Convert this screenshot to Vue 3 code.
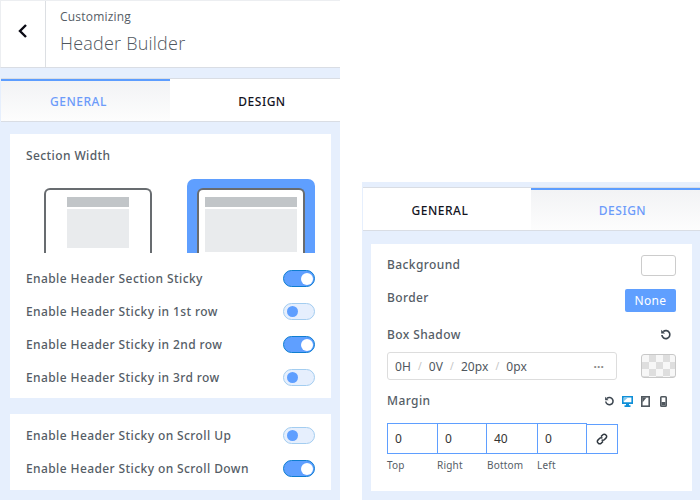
<script setup>
const stickyRows = [
  { label: 'Enable Header Section Sticky', on: true },
  { label: 'Enable Header Sticky in 1st row', on: false },
  { label: 'Enable Header Sticky in 2nd row', on: true },
  { label: 'Enable Header Sticky in 3rd row', on: false },
]
const scrollRows = [
  { label: 'Enable Header Sticky on Scroll Up', on: false },
  { label: 'Enable Header Sticky on Scroll Down', on: true },
]
const margins = [
  { value: '0', label: 'Top', width: 51 },
  { value: '0', label: 'Right', width: 50 },
  { value: '40', label: 'Bottom', width: 52 },
  { value: '0', label: 'Left', width: 50 },
]
</script>

<template>
  <div class="page">
    <section class="panel left">
      <header class="top">
        <div class="back">
          <svg width="12" height="16" viewBox="0 0 12 16"><path d="M9 2 3 8l6 6" fill="none" stroke="#0a0a14" stroke-width="2.4" /></svg>
        </div>
        <div class="heading">
          <div class="small">Customizing</div>
          <div class="big">Header Builder</div>
        </div>
      </header>
      <nav class="tabs first-tabs">
        <div class="tab active">GENERAL</div>
        <div class="tab">DESIGN</div>
      </nav>
      <div class="card width-card">
        <div class="title">Section Width</div>
        <div class="previews">
          <div class="preview">
            <div class="frame narrow">
              <div class="bar"></div>
              <div class="body"></div>
            </div>
          </div>
          <div class="preview selected">
            <div class="frame wide">
              <div class="bar"></div>
              <div class="body"></div>
            </div>
          </div>
        </div>
        <div class="rows">
          <div v-for="row in stickyRows" :key="row.label" class="row">
            <span>{{ row.label }}</span>
            <span class="toggle" :class="{ on: row.on }"><i></i></span>
          </div>
        </div>
      </div>
      <div class="card scroll-card">
        <div v-for="row in scrollRows" :key="row.label" class="row">
          <span>{{ row.label }}</span>
          <span class="toggle" :class="{ on: row.on }"><i></i></span>
        </div>
      </div>
    </section>

    <section class="panel right">
      <nav class="tabs second-tabs">
        <div class="tab">GENERAL</div>
        <div class="tab active">DESIGN</div>
      </nav>
      <div class="card design-card">
        <div class="line bg-line">
          <span class="label">Background</span>
          <span class="swatch"></span>
        </div>
        <div class="line border-line">
          <span class="label">Border</span>
          <button class="none">None</button>
        </div>
        <div class="line shadow-head">
          <span class="label">Box Shadow</span>
          <svg class="shadow-reset" width="12" height="12" viewBox="0 0 12 12"><path d="M3.200 2.600A4 4 0 1 1 1.900 6" fill="none" stroke="#3c4650" stroke-width="1.700" /><path d="M1.200 .8v3.800H5z" fill="#3c4650" /></svg>
        </div>
        <div class="shadow-line">
          <div class="shadow-input">
            <span>0H</span><em>/</em><span>0V</span><em>/</em><span>20px</span><em>/</em><span>0px</span>
            <b>···</b>
          </div>
          <span class="swatch checker"></span>
        </div>
        <div class="line margin-head">
          <span class="label">Margin</span>
          <div class="devices">
            <span class="device"><svg width="11" height="11" viewBox="0 0 12 12"><path d="M3.200 2.600A4 4 0 1 1 1.900 6" fill="none" stroke="#3c4650" stroke-width="1.700" /><path d="M1.200 .8v3.800H5z" fill="#3c4650" /></svg></span>
            <span class="device"><svg width="11" height="11" viewBox="0 0 11 11"><path d="M.8.8h9.400v6.400H.8z" fill="#fff" stroke="#0f8fd8" stroke-width="1.600" /><path d="M0 6.500h11V8H0zM4 8h3v1.300h1.500V11h-6V9.300H4z" fill="#0f8fd8" /><path d="M2 2h3.500L2 5z" fill="#0f8fd8" opacity=".5" /></svg></span>
            <span class="device"><svg width="9" height="11" viewBox="0 0 9 11"><rect x=".8" y=".8" width="7.400" height="9.400" fill="#fff" stroke="#50585f" stroke-width="1.600" /><path d="M1.500 1.500h4l-4 5z" fill="#50585f" /></svg></span>
            <span class="device"><svg width="7" height="11" viewBox="0 0 7 11"><rect x=".8" y=".8" width="5.400" height="9.400" rx=".8" fill="#fff" stroke="#50585f" stroke-width="1.600" /><path d="M1.500 6h4v3.500h-4z" fill="#50585f" /></svg></span>
          </div>
        </div>
        <div class="margin-fields">
          <div v-for="m in margins" :key="m.label" class="cell" :style="{ width: m.width + 'px' }">{{ m.value }}</div>
          <div class="link">
            <svg width="12" height="12" viewBox="0 0 12 12" fill="none" stroke="#303840" stroke-width="1.500"><path d="M5 3.600 6.800 1.800a1.900 1.900 0 0 1 2.900 0l.4.400a1.900 1.900 0 0 1 0 2.700L8.300 6.700a1.900 1.900 0 0 1-2.700 0" /><path d="M7 8.400 5.200 10.200a1.900 1.900 0 0 1-2.900 0l-.4-.4a1.900 1.900 0 0 1 0-2.700L3.700 5.300a1.900 1.900 0 0 1 2.700 0" /></svg>
          </div>
        </div>
        <div class="margin-labels">
          <span>Top</span>
          <span>Right</span>
          <span>Bottom</span>
          <span>Left</span>
        </div>
      </div>
    </section>
  </div>
</template>

<style>
body {
  background: #fff;
}
</style>

<style scoped>
.page {
  display: flex;
  align-items: flex-start;
  width: 700px;
  height: 500px;
  overflow: hidden;
  font-family: "Noto Sans", "Open Sans", sans-serif;
  color: #50575e;
}

.panel {
  background: #e6effd;
  box-sizing: border-box;
}

.left {
  width: 340px;
  height: 500px;
  margin-right: 22px;
}

.right {
  width: 338px;
  height: 318px;
  margin-top: 182px;
  padding-top: 5px;
}

.top {
  display: flex;
  height: 68px;
  box-sizing: border-box;
  background: #fff;
  border-top: 1px solid #eceef1;
  border-left: 1px solid #eceef1;
  border-bottom: 1px solid #d9dde4;
}

.back {
  display: flex;
  align-items: center;
  justify-content: center;
  width: 45px;
  box-sizing: border-box;
  border-right: 1px solid #dcdfe3;
  padding-bottom: 6px;
}

.heading {
  padding: 7px 0 0 14px;
}

.small {
  font-family: "Open Sans", sans-serif;
  font-size: 12px;
  line-height: 17px;
  letter-spacing: 0.2px;
  color: #555d66;
}

.big {
  font-family: "Open Sans", sans-serif;
  font-size: 18px;
  font-weight: 300;
  line-height: 24px;
  margin-top: 6px;
  letter-spacing: 0.22px;
  color: #50575e;
}

.tabs {
  display: flex;
  height: 44px;
  box-sizing: border-box;
  background: #fff;
  border-top: 1px solid #d9dde4;
  border-bottom: 1px solid #d9dde4;
}

.first-tabs {
  margin-top: 10px;
  margin-left: 1px;
}

.second-tabs {
  margin-left: 1px;
}

.tab {
  flex: 1;
  display: flex;
  align-items: center;
  justify-content: center;
  box-sizing: border-box;
  padding-top: 2px;
  font-size: 12px;
  font-weight: 500;
  letter-spacing: 0.5px;
  color: #14141e;
}

.tab:first-child {
  flex: 0 0 169px;
  padding-right: 14px;
}

.second-tabs .tab:first-child {
  flex-basis: 168px;
}

.tab:last-child {
  padding-left: 14px;
}

.tab.active {
  padding-top: 0;
  color: #6c9bfa;
  border-top: 2px solid #5c9dff;
  background: linear-gradient(#f2f3f5, #fdfdfd);
}

.card {
  background: #fff;
}

.width-card {
  width: 321px;
  height: 264px;
  margin: 12px 0 0 10px;
  box-sizing: border-box;
  padding-top: 13px;
}

.title {
  margin-left: 16px;
  font-size: 12px;
  font-weight: 500;
  line-height: 17px;
  letter-spacing: 0.4px;
  color: #555d66;
}

.previews {
  display: flex;
  justify-content: space-between;
  height: 74px;
  margin: 15px 16px 0 26px;
  box-sizing: border-box;
  padding-left: 8px;
}

.preview {
  display: flex;
  align-items: flex-end;
  justify-content: center;
  width: 108px;
  border-radius: 7px 7px 0 0;
}

.preview.selected {
  width: 128px;
  background: #5f9fff;
}

.frame {
  box-sizing: border-box;
  width: 108px;
  height: 65px;
  padding-top: 7px;
  background: #fff;
  border: 2px solid #686c70;
  border-bottom: none;
  border-radius: 6px 6px 0 0;
}

.bar {
  height: 10px;
  margin: 0 auto 2px;
  background: #c1c5c8;
}

.body {
  background: #e9ebed;
}

.narrow .bar,
.narrow .body {
  width: 62px;
}

.narrow .body {
  height: 39px;
  margin: 0 auto;
}

.wide .bar,
.wide .body {
  width: 92px;
}

.wide .body {
  height: 43px;
  margin: 0 auto;
}

.rows {
  margin-top: 9px;
}

.row {
  display: flex;
  align-items: center;
  justify-content: space-between;
  height: 33px;
  padding: 0 16px;
  font-size: 12px;
  font-weight: 500;
  letter-spacing: 0.4px;
  color: #555d66;
}

.scroll-card {
  width: 321px;
  height: 76px;
  margin: 16px 0 0 10px;
  box-sizing: border-box;
  padding-top: 5px;
}

.toggle {
  display: flex;
  align-items: center;
  width: 32px;
  height: 17px;
  box-sizing: border-box;
  padding: 0 2px 0 3px;
  border: 1px solid #a3cdf0;
  border-radius: 9px;
  background: #e6effd;
}

.toggle i {
  display: block;
  width: 11px;
  height: 11px;
  border-radius: 50%;
  background: #5f9fff;
}

.toggle.on {
  justify-content: flex-end;
  padding: 0 1px;
  border-color: #0f7ed0;
  background: #5f9fff;
}

.toggle.on i {
  width: 12px;
  height: 12px;
  background: #fff;
}

.design-card {
  width: 321px;
  height: 247px;
  margin: 13px 0 0 9px;
  box-sizing: border-box;
  padding: 11px 16px 0;
}

.line {
  display: flex;
  align-items: center;
  justify-content: space-between;
}

.label {
  padding-bottom: 2px;
  font-size: 12px;
  font-weight: 500;
  letter-spacing: 0.4px;
  color: #555d66;
}

.bg-line {
  height: 21px;
}

.swatch {
  width: 35px;
  height: 21px;
  box-sizing: border-box;
  border: 1px solid #ccc;
  border-radius: 3px;
  background: #fff;
}

.border-line {
  height: 23px;
  margin-top: 13px;
  align-items: flex-start;
}

.none {
  width: 51px;
  height: 23px;
  padding: 0;
  border: none;
  border-radius: 2px;
  background: #5f9fff;
  color: #fff;
  font-family: inherit;
  font-size: 12px;
  letter-spacing: 0.3px;
}

.shadow-head {
  height: 18px;
  margin-top: 14px;
}

.shadow-reset {
  flex: none;
  margin-right: 4px;
}

.shadow-line {
  display: flex;
  align-items: center;
  justify-content: space-between;
  margin-top: 8px;
}

.shadow-input {
  display: flex;
  align-items: center;
  width: 230px;
  height: 28px;
  box-sizing: border-box;
  padding: 0 7px;
  border: 1px solid #ddd;
  border-radius: 3px;
  font-size: 12px;
  letter-spacing: 0.1px;
  color: #50575e;
}

.shadow-input em {
  margin: 0 7px;
  font-style: normal;
  font-size: 10px;
  color: #c4c4c4;
}

.shadow-input b {
  margin-left: auto;
  margin-right: 5px;
  font-size: 12px;
  color: #888;
}

.checker {
  height: 24px;
  border-color: #c8c8c8;
  background: repeating-conic-gradient(#dedede 0 25%, #f7f7f7 0 50%) 0 0 / 14px 14px;
}

.margin-head {
  height: 18px;
  margin-top: 12px;
}

.devices {
  display: flex;
  align-items: center;
  margin-right: 4px;
}

.device {
  display: flex;
  align-items: center;
  justify-content: center;
  width: 18px;
}

.margin-fields {
  display: flex;
  align-items: flex-start;
  margin-top: 13px;
}

.cell {
  height: 31px;
  box-sizing: border-box;
  padding-left: 7px;
  border: 1px solid #5f9fff;
  margin-right: -1px;
  font-size: 12px;
  line-height: 29px;
  color: #333;
}

.cell:nth-child(4) {
  margin-right: 0;
}

.link {
  display: flex;
  align-items: center;
  justify-content: center;
  width: 31px;
  height: 30px;
  margin-top: 1px;
  box-sizing: border-box;
  border: 1px solid #5f9fff;
  border-left: none;
}

.margin-labels {
  display: flex;
  margin-top: 4px;
  font-size: 10px;
  line-height: 14px;
  letter-spacing: 0.2px;
  color: #555d66;
}

.margin-labels span {
  width: 50px;
}
</style>
